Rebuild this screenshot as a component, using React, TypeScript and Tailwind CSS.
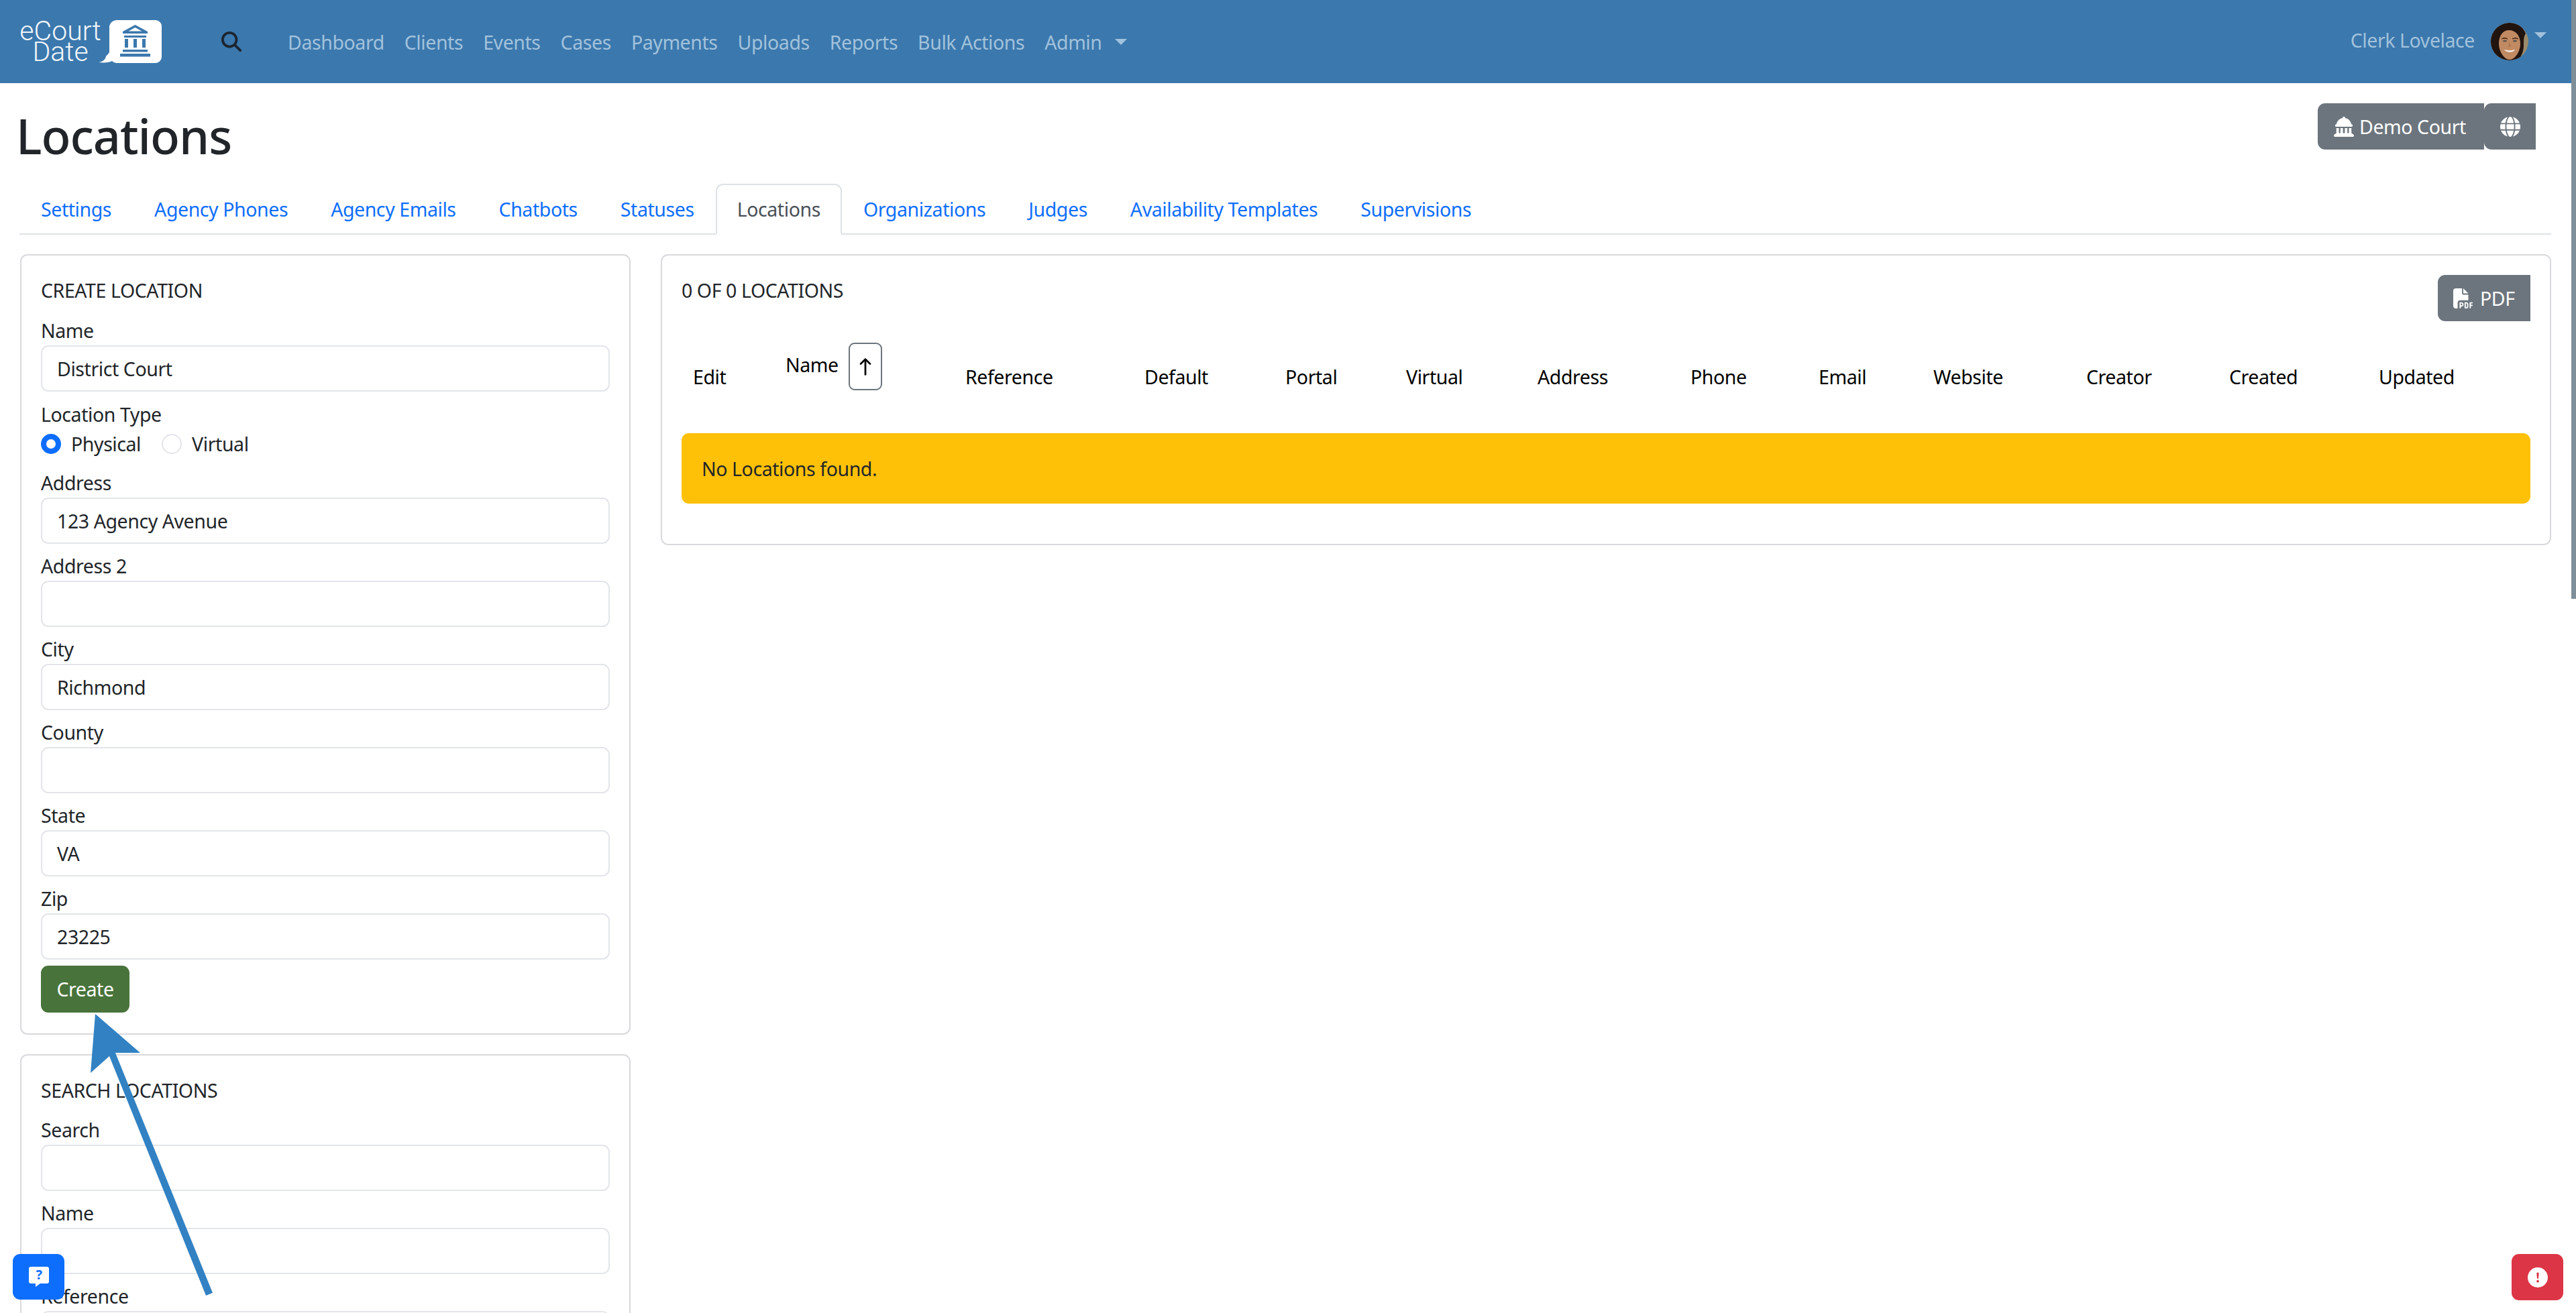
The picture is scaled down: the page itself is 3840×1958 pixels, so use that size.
import { BsArrowUp, BsExclamationCircleFill } from 'react-icons/bs'
import { FaFilePdf, FaGlobe, FaLandmarkDome, FaMagnifyingGlass } from 'react-icons/fa6'

const navItems = ['Dashboard', 'Clients', 'Events', 'Cases', 'Payments', 'Uploads', 'Reports', 'Bulk Actions', 'Admin']
const tabs = ['Settings', 'Agency Phones', 'Agency Emails', 'Chatbots', 'Statuses', 'Locations', 'Organizations', 'Judges', 'Availability Templates', 'Supervisions']
const columns = ['Reference', 'Default', 'Portal', 'Virtual', 'Address', 'Phone', 'Email', 'Website', 'Creator', 'Created', 'Updated']

function Logo() {
  return (
    <div className="flex items-center ml-[29px] w-[212px] shrink-0">
      <div className="w-[122px] text-center font-['Roboto',sans-serif] font-light text-[41px] leading-[31px] tracking-[0px] text-[#f2f6fa]">
        <div>eCourt</div>
        <div>Date</div>
      </div>
      <svg viewBox="0 0 94 64" className="w-[94px] h-[64px] -ml-[4px] shrink-0">
        <path d="M27 0H85a9 9 0 0 1 9 9V55a9 9 0 0 1-9 9H27a9 9 0 0 1-7-3c-4 2-10 3-20 2 6-1 10-4 11-9 1-2 5-4 5-7V9a11 11 0 0 1 11-9Z" fill="#fff" />
        <path d="M54.5 7 36 17v3h37v-3ZM54.5 11l10 5.500h-20Z" fill="#3b78ad" fillRule="evenodd" />
        <path d="M38 23h33v3H38ZM39 28h5v13h-5ZM52 28h5v13h-5ZM65 28h5v13h-5ZM36 44h37v3.500H36ZM32 50h45v4.500H32Z" fill="#3b78ad" />
      </svg>
    </div>
  )
}

function Avatar() {
  return (
    <svg viewBox="0 0 56 56" className="w-[56px] h-[56px] shrink-0">
      <defs>
        <clipPath id="avatar-clip"><circle cx="28" cy="28" r="28" /></clipPath>
      </defs>
      <g clipPath="url(#avatar-clip)">
        <rect width="56" height="56" fill="#9c8a6c" />
        <path d="M0 56V24C2 8 16 0 28 0s20 6 24 16c-3 4-3 10-3 18 0 8-3 15-8 22Z" fill="#21130e" />
        <path d="M12 31c0-12 6-20 15-20 10 0 17 8 17 20 0 12-8 24-16 24S12 43 12 31Z" fill="#c18a62" />
        <path d="M16 24c3-2 6-2 9 0-3-1-6-1-9 0ZM32 24c3-2 6-2 9 0-3-1-6-1-9 0Z" fill="#4a2c1a" stroke="#4a2c1a" />
        <ellipse cx="21" cy="27" rx="3" ry="1.500" fill="#5f5a52" />
        <ellipse cx="36" cy="27" rx="3" ry="1.500" fill="#5f5a52" />
        <path d="M28 28l-2 8h4Z" fill="#ad7650" />
        <path d="M20 40c5 1.500 11 1.500 16 0-2 5-13 5-16 0Z" fill="#f3ece6" />
      </g>
    </svg>
  )
}

function Field({ label, value }: { label: string; value?: string }) {
  return (
    <div className="mt-[11px]">
      <div className="h-[44px]">{label}</div>
      <div className="h-[69px] border-2 border-[#e3e5ea] rounded-[11px] px-[22px] flex items-center">{value}</div>
    </div>
  )
}

function Radio({ checked, label }: { checked?: boolean; label: string }) {
  return (
    <div className="flex items-center">
      {checked ? (
        <span className="w-[30px] h-[30px] rounded-full border-[8px] border-[#0d6efd] bg-white" />
      ) : (
        <span className="w-[30px] h-[30px] rounded-full border-2 border-[#e3e5ea] bg-white" />
      )}
      <span className="ml-[15px]">{label}</span>
    </div>
  )
}

export default function App() {
  return (
    <div className="relative h-[1958px] overflow-hidden bg-white font-['Noto_Sans',sans-serif] text-[28.5px] leading-[44px] tracking-[-0.42px] text-[#212529]">
      {/* Navbar */}
      <nav className="h-[124px] bg-[#3b78ad] flex items-center text-[#a2c2dc]">
        <Logo />
        <FaMagnifyingGlass className="ml-[89px] w-[30px] h-[30px] text-[#1c2530] shrink-0" />
        <div className="ml-[69px] flex gap-[30px] mt-[2px]">
          {navItems.map((item) => (
            <span key={item}>{item}</span>
          ))}
        </div>
        <span className="ml-[19px] mt-[1px] border-x-[9px] border-t-[9px] border-x-transparent border-t-[#a2c2dc]" />
        <div className="ml-auto mr-[44px] flex items-center">
          <span className="-mt-[4px]">Clerk Lovelace</span>
          <span className="ml-[24px]"><Avatar /></span>
          <span className="ml-[9px] -mt-[20px] border-x-[9px] border-t-[9px] border-x-transparent border-t-[#a2c2dc]" />
        </div>
      </nav>

      {/* Title */}
      <div className="h-[150px] flex items-start justify-between pl-[24px] pr-[60px]">
        <h1 className="mt-[34px] text-[72px] leading-[88px] font-medium tracking-[-1px]">Locations</h1>
        <div className="mt-[30px] flex text-white">
          <div className="h-[69px] w-[248px] bg-[#6c757d] rounded-l-[11px] flex items-center pl-[24px] gap-[8px]">
            <FaLandmarkDome className="w-[30px] h-[30px]" />
            <span>Demo Court</span>
          </div>
          <div className="h-[69px] w-[77px] bg-[#6c757d] rounded-l-[11px] flex items-center justify-center">
            <FaGlobe className="w-[30px] h-[30px]" />
          </div>
        </div>
      </div>

      {/* Tabs */}
      <div className="ml-[29px] mr-[37px] flex border-b-2 border-[#dee2e6] h-[76px]">
        {tabs.map((tab) =>
          tab === 'Locations' ? (
            <div key={tab} className="h-[76px] px-[30px] py-[14px] border-2 border-[#dee2e6] border-b-white rounded-t-[11px] text-[#495057]">
              {tab}
            </div>
          ) : (
            <div key={tab} className="h-[76px] px-[32px] py-[16px] text-[#0d6efd]">
              {tab}
            </div>
          ),
        )}
      </div>

      {/* Content */}
      <div className="mt-[29px] flex items-start gap-[45px] pl-[30px] pr-[37px]">
        <div className="w-[910px] shrink-0">
          <section className="border-2 border-[#d9d9de] rounded-[11px] px-[29px] pt-[30px] pb-[31px]">
            <div className="h-[44px]">CREATE LOCATION</div>
            <div className="h-[5px]" />
            <Field label="Name" value="District Court" />
            <div className="mt-[12px] h-[44px]">Location Type</div>
            <div className="h-[47px] flex gap-[31px] items-start">
              <Radio checked label="Physical" />
              <Radio label="Virtual" />
            </div>
            <Field label="Address" value="123 Agency Avenue" />
            <Field label="Address 2" />
            <Field label="City" value="Richmond" />
            <Field label="County" />
            <Field label="State" value="VA" />
            <Field label="Zip" value="23225" />
            <button className="mt-[9px] h-[70px] w-[132px] bg-[#48733b] text-white rounded-[11px] tracking-[-0.42px]">Create</button>
          </section>

          <section className="mt-[29px] border-2 border-[#d9d9de] rounded-[11px] px-[29px] pt-[30px]">
            <div className="h-[44px]">SEARCH LOCATIONS</div>
            <div className="h-[4px]" />
            <Field label="Search" />
            <Field label="Name" />
            <Field label="Reference" />
          </section>
        </div>

        <section className="flex-1 border-2 border-[#d9d9de] rounded-[11px] px-[29px] pt-[30px] pb-[60px]">
          <div className="h-[100px] flex justify-between items-start">
            <span>0 OF 0 LOCATIONS</span>
            <div className="-mt-px h-[69px] w-[138px] bg-[#6c757d] text-white rounded-l-[11px] flex items-center pl-[23px] gap-[10px]">
              <FaFilePdf className="w-[30px] h-[30px]" />
              <span>PDF</span>
            </div>
          </div>
          <div className="grid grid-cols-[138px_268px_267px_210px_180px_196px_228px_191px_171px_228px_213px_223px_242px] h-[73px] items-end text-black">
            <div className="pl-[17px]">Edit</div>
            <div className="pl-[17px] h-full flex items-start">
              <span className="mt-[11px]">Name</span>
              <span className="ml-[15px] w-[50px] h-[71px] border-2 border-[#6c757d] rounded-[9px] flex items-center justify-center">
                <BsArrowUp className="w-[28px] h-[28px] text-black stroke-[0.6px]" />
              </span>
            </div>
            {columns.map((col) => (
              <div key={col} className="pl-[17px]">{col}</div>
            ))}
          </div>
          <div className="mt-[62px] h-[105px] bg-[#ffc107] rounded-[11px] pl-[30px] flex items-center">No Locations found.</div>
        </section>
      </div>

      {/* Annotation arrow */}
      <svg className="absolute left-0 top-0 w-[340px] h-[1958px] pointer-events-none" viewBox="0 0 340 1958">
        <polygon points="142,1512 209,1570 172,1570 317,1928 307,1932 163,1575 135,1600" fill="#3282c3" />
      </svg>

      {/* Floating buttons */}
      <button className="absolute left-[19px] top-[1870px] w-[77px] h-[68px] bg-[#0d6efd] rounded-[11px] flex items-center justify-center">
        <svg viewBox="0 0 30 30" className="w-[30px] h-[30px]">
          <path d="M3 0h24a3 3 0 0 1 3 3v19a3 3 0 0 1-3 3H17l-7 5v-5H3a3 3 0 0 1-3-3V3a3 3 0 0 1 3-3Z" fill="#fff" />
          <text x="15" y="19" textAnchor="middle" fontSize="20" fontWeight="700" fill="#0d6efd" fontFamily="Noto Sans, sans-serif">?</text>
        </svg>
      </button>
      <button className="absolute left-[3744px] top-[1870px] w-[77px] h-[69px] bg-[#dc3545] rounded-[11px] flex items-center justify-center text-white">
        <BsExclamationCircleFill className="w-[30px] h-[30px]" />
      </button>

      {/* Scrollbar thumb */}
      <div className="absolute right-0 top-0 w-[7px] h-[893px] bg-[#7f8f9a]" />
    </div>
  )
}
